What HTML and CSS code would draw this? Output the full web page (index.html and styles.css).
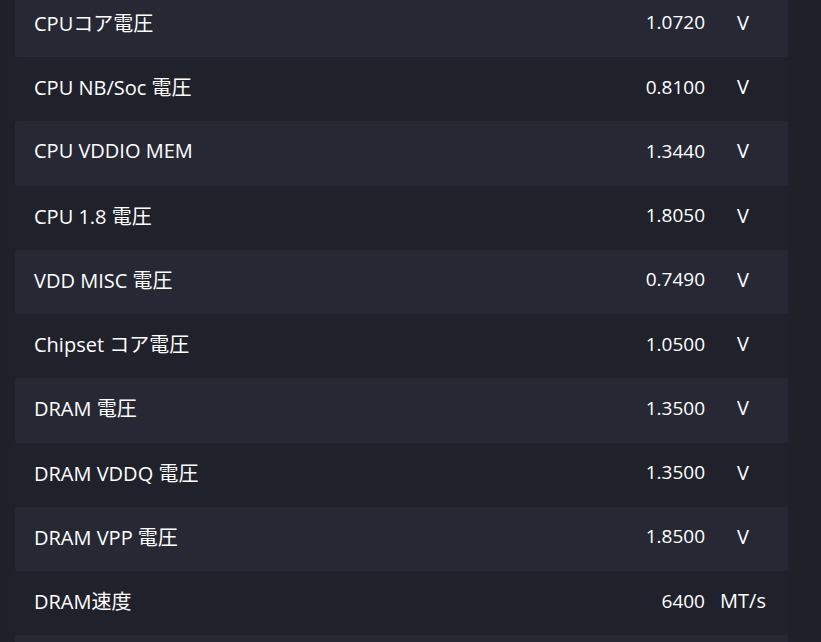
FILE: index.html
```html
<!DOCTYPE html>
<html lang="ja">
<head>
<meta charset="utf-8">
<link rel="stylesheet" href="styles.css">
</head>
<body>
<div class="list">
  <div class="row light"><span class="label">CPUコア電圧</span><span class="value">1.0720</span><span class="unit">V</span></div>
  <div class="row dark"><span class="label">CPU NB/Soc 電圧</span><span class="value">0.8100</span><span class="unit">V</span></div>
  <div class="row light"><span class="label">CPU VDDIO MEM</span><span class="value">1.3440</span><span class="unit">V</span></div>
  <div class="row dark"><span class="label">CPU 1.8 電圧</span><span class="value">1.8050</span><span class="unit">V</span></div>
  <div class="row light"><span class="label">VDD MISC 電圧</span><span class="value">0.7490</span><span class="unit">V</span></div>
  <div class="row dark"><span class="label">Chipset コア電圧</span><span class="value">1.0500</span><span class="unit">V</span></div>
  <div class="row light"><span class="label">DRAM 電圧</span><span class="value">1.3500</span><span class="unit">V</span></div>
  <div class="row dark"><span class="label">DRAM VDDQ 電圧</span><span class="value">1.3500</span><span class="unit">V</span></div>
  <div class="row light"><span class="label">DRAM VPP 電圧</span><span class="value">1.8500</span><span class="unit">V</span></div>
  <div class="row dark"><span class="label">DRAM速度</span><span class="value">6400</span><span class="unit">MT/s</span></div>
  <div class="row light"><span class="label"></span><span class="value"></span><span class="unit"></span></div>
</div>
</body>
</html>
```

FILE: styles.css
```css
html, body {
  margin: 0;
  padding: 0;
  background: #1f2129;
  overflow: hidden;
}
body {
  width: 821px;
  height: 642px;
  font-family: "Open Sans", "Noto Sans CJK JP", sans-serif;
  font-size: 19px;
  color: #ffffff;
}
.list {
  margin: -7.25px 0 0 15px;
  width: 773px;
}
.row {
  height: 64.25px;
  display: grid;
  grid-template-columns: 1fr auto 60px;
  align-items: center;
  padding: 0 15px 0 19px;
  box-sizing: border-box;
  border-radius: 2px;
}
.row.light { background: #262934; }
.row.dark { background: #20222b; }
.label {
  white-space: nowrap;
  font-size: 20px;
  margin-top: -5px;
}
.value {
  text-align: right;
  margin-right: 8px;
  margin-top: -5px;
}
.unit {
  text-align: center;
  font-size: 20px;
  margin-top: -5px;
}
```
